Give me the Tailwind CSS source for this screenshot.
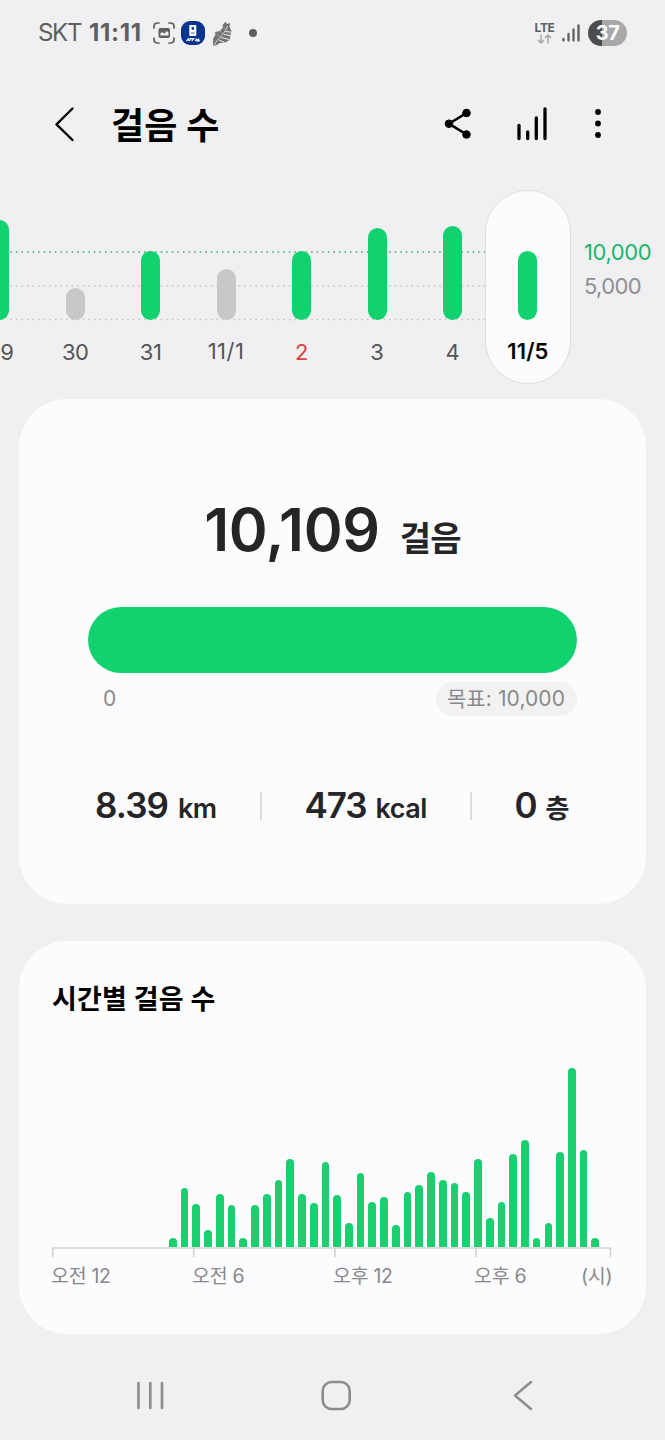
<!DOCTYPE html>
<html lang="ko">
<head>
<meta charset="utf-8">
<title>걸음 수</title>
<script src="https://cdn.jsdelivr.net/npm/@tailwindcss/browser@4"></script>
</head>
<body class="w-[665px] h-[1440px] overflow-hidden bg-[#f0f0f2] font-[Inter,'Noto_Sans_CJK_KR',sans-serif] text-[#252527] flex flex-col whitespace-nowrap">

<!-- Status bar -->
<div class="h-[66px] pl-[38px] pr-[38px] flex items-center justify-between text-[#5f5f61] shrink-0">
  <div class="flex items-center">
    <span class="w-[51px] text-[24px] leading-[30px] tracking-[-1.3px]">SKT</span>
    <span class="w-[64px] text-[24px] leading-[30px] font-bold tracking-[0.7px]">11:11</span>
    <svg class="w-[22px] h-[22px] shrink-0" viewBox="0 0 22 22" fill="none" stroke="#5f5f61" stroke-width="1.7" stroke-linecap="round"><path d="M1 6V4.500Q1 1 4.500 1H6M16 1h1.500Q21 1 21 4.500V6M21 16v1.500Q21 21 17.500 21H16M6 21H4.500Q1 21 1 17.500V16"/><rect x="5.500" y="6" width="11.500" height="10" rx="2" fill="#5f5f61" stroke="none"/><path d="M7.300 13.500v-2l2-1.500 2 1.700 2.500-2.700 1.700 1.500v3z" fill="#f0f0f2" stroke="none"/></svg>
    <svg class="w-[24px] h-[24px] ml-[6px] shrink-0" viewBox="0 0 24 24"><rect width="24" height="24" rx="9" fill="#06348f"/><rect x="8.300" y="4" width="7" height="11" rx="0.800" fill="#fff"/><rect x="10.500" y="6" width="2.600" height="2.800" rx="1" fill="#06348f"/><path d="M10 12h3.500" stroke="#06348f" stroke-width="0.800"/><path d="M5.500 20l2-2.300.5 2.300M8.500 20l1-2.300h1.700M11 20l1-2.300h1.500M14.500 18l1 .3-1.500 1.500M16 20l1.500-1.800.7 1.800z" stroke="#fff" stroke-width="1.200" fill="none"/></svg>
    <svg class="w-[21px] h-[25px] ml-[7px] shrink-0" viewBox="0 0 21 25"><path d="M1 24.500L1.200 17.500 3.500 13.500 3 11 8 10 10.500 7 11 3.500 13.500 .8 15 3 18.200 2 17.500 6 19.500 10 18.500 14 17.500 19 13.500 21.500 8 22 4 24.500z" fill="#737375"/><path d="M2.500 24C5 17 12 15 15.500 5" stroke="#d8d8da" stroke-width="1" fill="none"/><path d="M7 19l5.500 2.500M9 16.500l8 2M12 13.500l6.500 1M13.500 10.500l5.500.7" stroke="#f0f0f2" stroke-width="1" fill="none"/><path d="M3.500 12.500l4 3M8 10l3 2.500M11 6l3 2.500" stroke="#a5a5a7" stroke-width="0.700"/></svg>
    <span class="size-[8px] rounded-full bg-[#5f5f61] ml-[16px]"></span>
  </div>
  <div class="flex items-center">
    <div class="w-[21px] flex flex-col items-center">
      <span class="text-[12px] leading-[12px] font-bold tracking-[-0.400px]">LTE</span>
      <svg class="w-[15px] h-[10px]" viewBox="0 0 15 10" fill="none" stroke="#a8a8aa" stroke-width="1.500"><path d="M4 .5V9M1 6l3 3 3-3M11 9.500V1M8 4l3-3 3 3"/></svg>
    </div>
    <svg class="w-[18px] h-[19px] ml-[7px]" viewBox="0 0 18 19" stroke="#5f5f61" stroke-width="2.300" stroke-linecap="round"><path d="M1.500 14.800v1.700M6.500 10v6.500M11.500 5.500v11M16.500 1.500v15"/></svg>
    <div class="w-[39px] h-[26px] ml-[8px] rounded-full bg-linear-to-r from-[#4c4c4e] from-[36%] to-[#a8a8aa] to-[36%] text-white text-[20px] leading-[26px] font-bold text-center tracking-[-0.500px]">37</div>
  </div>
</div>

<!-- App header -->
<div class="h-[114px] pl-[54px] pr-[64px] pt-[2px] flex items-center justify-between shrink-0 text-black">
  <div class="flex items-center">
    <svg class="w-[21px] h-[35px]" viewBox="0 0 21 35" fill="none" stroke="#000" stroke-width="2.400" stroke-linecap="round" stroke-linejoin="round"><path d="M18.500 1.500L2.500 17.300 18.500 33"/></svg>
    <h1 class="ml-[36px] pt-[3px] text-[36px] leading-[48px] font-bold tracking-[0.200px]">걸음 수</h1>
  </div>
  <div class="flex items-center">
    <svg class="w-[28px] h-[32px]" viewBox="0 0 28 32" fill="#000" stroke="#000"><path d="M22.500 5L5 15.700 22.500 26.500" fill="none" stroke-width="2.600"/><circle cx="22.500" cy="5" r="3.800"/><circle cx="5" cy="15.700" r="3.800"/><circle cx="22.500" cy="26.500" r="3.800"/></svg>
    <svg class="w-[32px] h-[34px] ml-[44px]" viewBox="0 0 32 34" stroke="#000" stroke-width="3.300" stroke-linecap="round"><path d="M3 18.500v13M11.700 24.800v6.700M20.300 11v20.500M29 2v29.500"/></svg>
    <svg class="w-[6px] h-[30px] ml-[47px]" viewBox="0 0 6 30"><circle cx="3" cy="3" r="2.900"/><circle cx="3" cy="14.500" r="2.900"/><circle cx="3" cy="26" r="2.900"/></svg>
  </div>
</div>

<!-- Daily chart -->
<div class="h-[219px] relative flex shrink-0">
  <svg class="absolute left-0 top-0 w-[485px] h-[145px]" viewBox="0 0 485 145" fill="none" stroke-width="1.500"><path d="M10.300 72H485" stroke="#3fae7c" stroke-dasharray="1.600 3.970"/><path d="M10.300 106H485M10.300 139.500H485" stroke="#c3c3c6" stroke-dasharray="1.600 3.970"/></svg>
  <div class="relative ml-[-38px] pt-[10px] flex text-[22px] leading-[28px] tracking-[-0.500px] text-[#555558] text-center">
    <div class="w-[75.450px] flex flex-col items-center"><div class="h-[130px] flex items-end"><i class="block w-[19px] h-[100px] rounded-full bg-[#12d16f]"></i></div><span class="mt-[18px] pl-[14px]">9</span></div>
    <div class="w-[75.450px] flex flex-col items-center"><div class="h-[130px] flex items-end"><i class="block w-[19px] h-[32px] rounded-full bg-[#c8c8ca]"></i></div><span class="mt-[18px]">30</span></div>
    <div class="w-[75.450px] flex flex-col items-center"><div class="h-[130px] flex items-end"><i class="block w-[19px] h-[69px] rounded-full bg-[#12d16f]"></i></div><span class="mt-[18px]">31</span></div>
    <div class="w-[75.450px] flex flex-col items-center"><div class="h-[130px] flex items-end"><i class="block w-[19px] h-[51px] rounded-full bg-[#c8c8ca]"></i></div><span class="mt-[17px] tracking-[0.500px]">11/1</span></div>
    <div class="w-[75.450px] flex flex-col items-center"><div class="h-[130px] flex items-end"><i class="block w-[19px] h-[69px] rounded-full bg-[#12d16f]"></i></div><span class="mt-[18px] text-[#d64545]">2</span></div>
    <div class="w-[75.450px] flex flex-col items-center"><div class="h-[130px] flex items-end pl-[1px]"><i class="block w-[19px] h-[92px] rounded-full bg-[#12d16f]"></i></div><span class="mt-[18px]">3</span></div>
    <div class="w-[70.300px] pl-[1px] flex flex-col items-center"><div class="h-[130px] flex items-end pl-[4px]"><i class="block w-[19px] h-[94px] rounded-full bg-[#12d16f]"></i></div><span class="mt-[18px] pl-[4px]">4</span></div>
    <div class="w-[86px] h-[194px] rounded-full bg-[#fcfcfe] border border-[#dedee1] flex flex-col items-center"><div class="h-[129px] flex items-end"><i class="block w-[19px] h-[69px] rounded-full bg-[#12d16f]"></i></div><span class="mt-[17px] text-black font-semibold tracking-[0.100px]">11/5</span></div>
  </div>
  <div class="ml-[13px] pt-[58px] text-[22px] leading-[28px] tracking-[-0.400px] flex flex-col gap-[6px] text-[#8f8f92]">
    <span class="text-[#1cb56a]">10,000</span>
    <span class="tracking-[-0.600px]">5,000</span>
  </div>
</div>

<!-- Today summary -->
<section class="mx-[19px] h-[505px] rounded-[48px] bg-[#fcfcfe] shrink-0 flex flex-col items-center">
  <div class="mt-[93px] h-[76px] flex items-baseline">
    <span class="text-[59px] leading-[76px] font-semibold tracking-[-0.300px]">10,109</span>
    <span class="ml-[20px] text-[34px] font-bold tracking-[-0.800px]">걸음</span>
  </div>
  <div class="mt-[39px] w-[489px] h-[66px] rounded-full bg-[#12d16f]"></div>
  <div class="mt-[9px] w-[489px] h-[34px] pl-[15px] flex justify-between items-center text-[21px] leading-[34px] tracking-[-0.100px] text-[#8a8a8c]">
    <span>0</span>
    <span class="w-[141px] pr-[1px] rounded-full bg-[#f2f2f3] text-center tracking-[0.100px]">목표: 10,000</span>
  </div>
  <div class="mt-[67px] w-full h-[48px] flex items-center text-[27px] leading-[48px] font-semibold">
    <div class="w-[241px] pl-[76px]"><span class="text-[35px] tracking-[-0.900px]">8.39</span><span class="ml-[10px] tracking-[-0.700px]">km</span></div>
    <i class="w-[1.500px] h-[28px] mb-[2px] bg-[#dcdcde]"></i>
    <div class="w-[208.500px] pl-[43px]"><span class="text-[35px] tracking-[-1.100px]">473</span><span class="ml-[9px] tracking-[-0.500px]">kcal</span></div>
    <i class="w-[1.500px] h-[28px] mb-[2px] bg-[#dcdcde]"></i>
    <div class="pl-[43px]"><span class="text-[35px]">0</span><span class="ml-[8px] text-[26px] font-bold">층</span></div>
  </div>
</section>

<!-- Hourly steps -->
<section class="mt-[37px] mx-[19px] h-[393px] rounded-[48px] bg-[#fcfcfe] shrink-0 pl-[33px] pt-[39px]">
  <h2 class="text-[27px] leading-[40px] font-bold text-black tracking-[0.200px]">시간별 걸음 수</h2>
  <div id="hours" class="mt-[39px] h-[188px] pl-[117px] flex items-end gap-[4.050px]"></div>
  <svg class="block w-[560px] h-[11px]" viewBox="0 0 560 11" fill="none" stroke="#d2d2d5" stroke-width="1.600"><path d="M.8 10V1H558.500V10M141.800 1V10M282.900 1V10M424 1V10"/></svg>
  <div class="mt-[4px] -ml-[1px] flex text-[19.500px] leading-[28px] tracking-[-0.300px] text-[#88888a]">
    <span class="w-[141px]">오전 12</span><span class="w-[141px]">오전 6</span><span class="w-[141px]">오후 12</span><span class="w-[107px]">오후 6</span><span>(시)</span>
  </div>
</section>

<!-- Navigation bar -->
<nav class="grow flex items-center pl-[136px] pt-[15px]">
  <svg class="w-[28px] h-[30px]" viewBox="0 0 28 30" stroke="#8c8c8e" stroke-width="2.600" stroke-linecap="round"><path d="M2.500 3v25M14.300 3v25M26 3v25"/></svg>
  <svg class="w-[32px] h-[32px] ml-[156px]" viewBox="0 0 32 32" fill="none" stroke="#8c8c8e" stroke-width="2.600"><rect x="2.700" y="3" width="27" height="27" rx="9"/></svg>
  <svg class="w-[20px] h-[32px] ml-[161px]" viewBox="0 0 20 32" fill="none" stroke="#8c8c8e" stroke-width="2.400" stroke-linecap="round" stroke-linejoin="round"><path d="M18 3L2 16.500 18 30"/></svg>
</nav>

<script>
const heights = [9,59.5,43.5,17.5,53.5,42.5,9,42,53,67,88,53.5,44.5,85,52,24,74,45.5,50,22.5,55,62,75,67,64.5,55.5,88,29,45,93.5,107.5,9,24.5,95.5,179,97.5,9];
document.getElementById('hours').innerHTML = heights.map(h => `<i class="block w-[7.700px] rounded-t-full bg-[#1bce6f]" style="height:${h}px"></i>`).join('');
</script>
</body>
</html>
